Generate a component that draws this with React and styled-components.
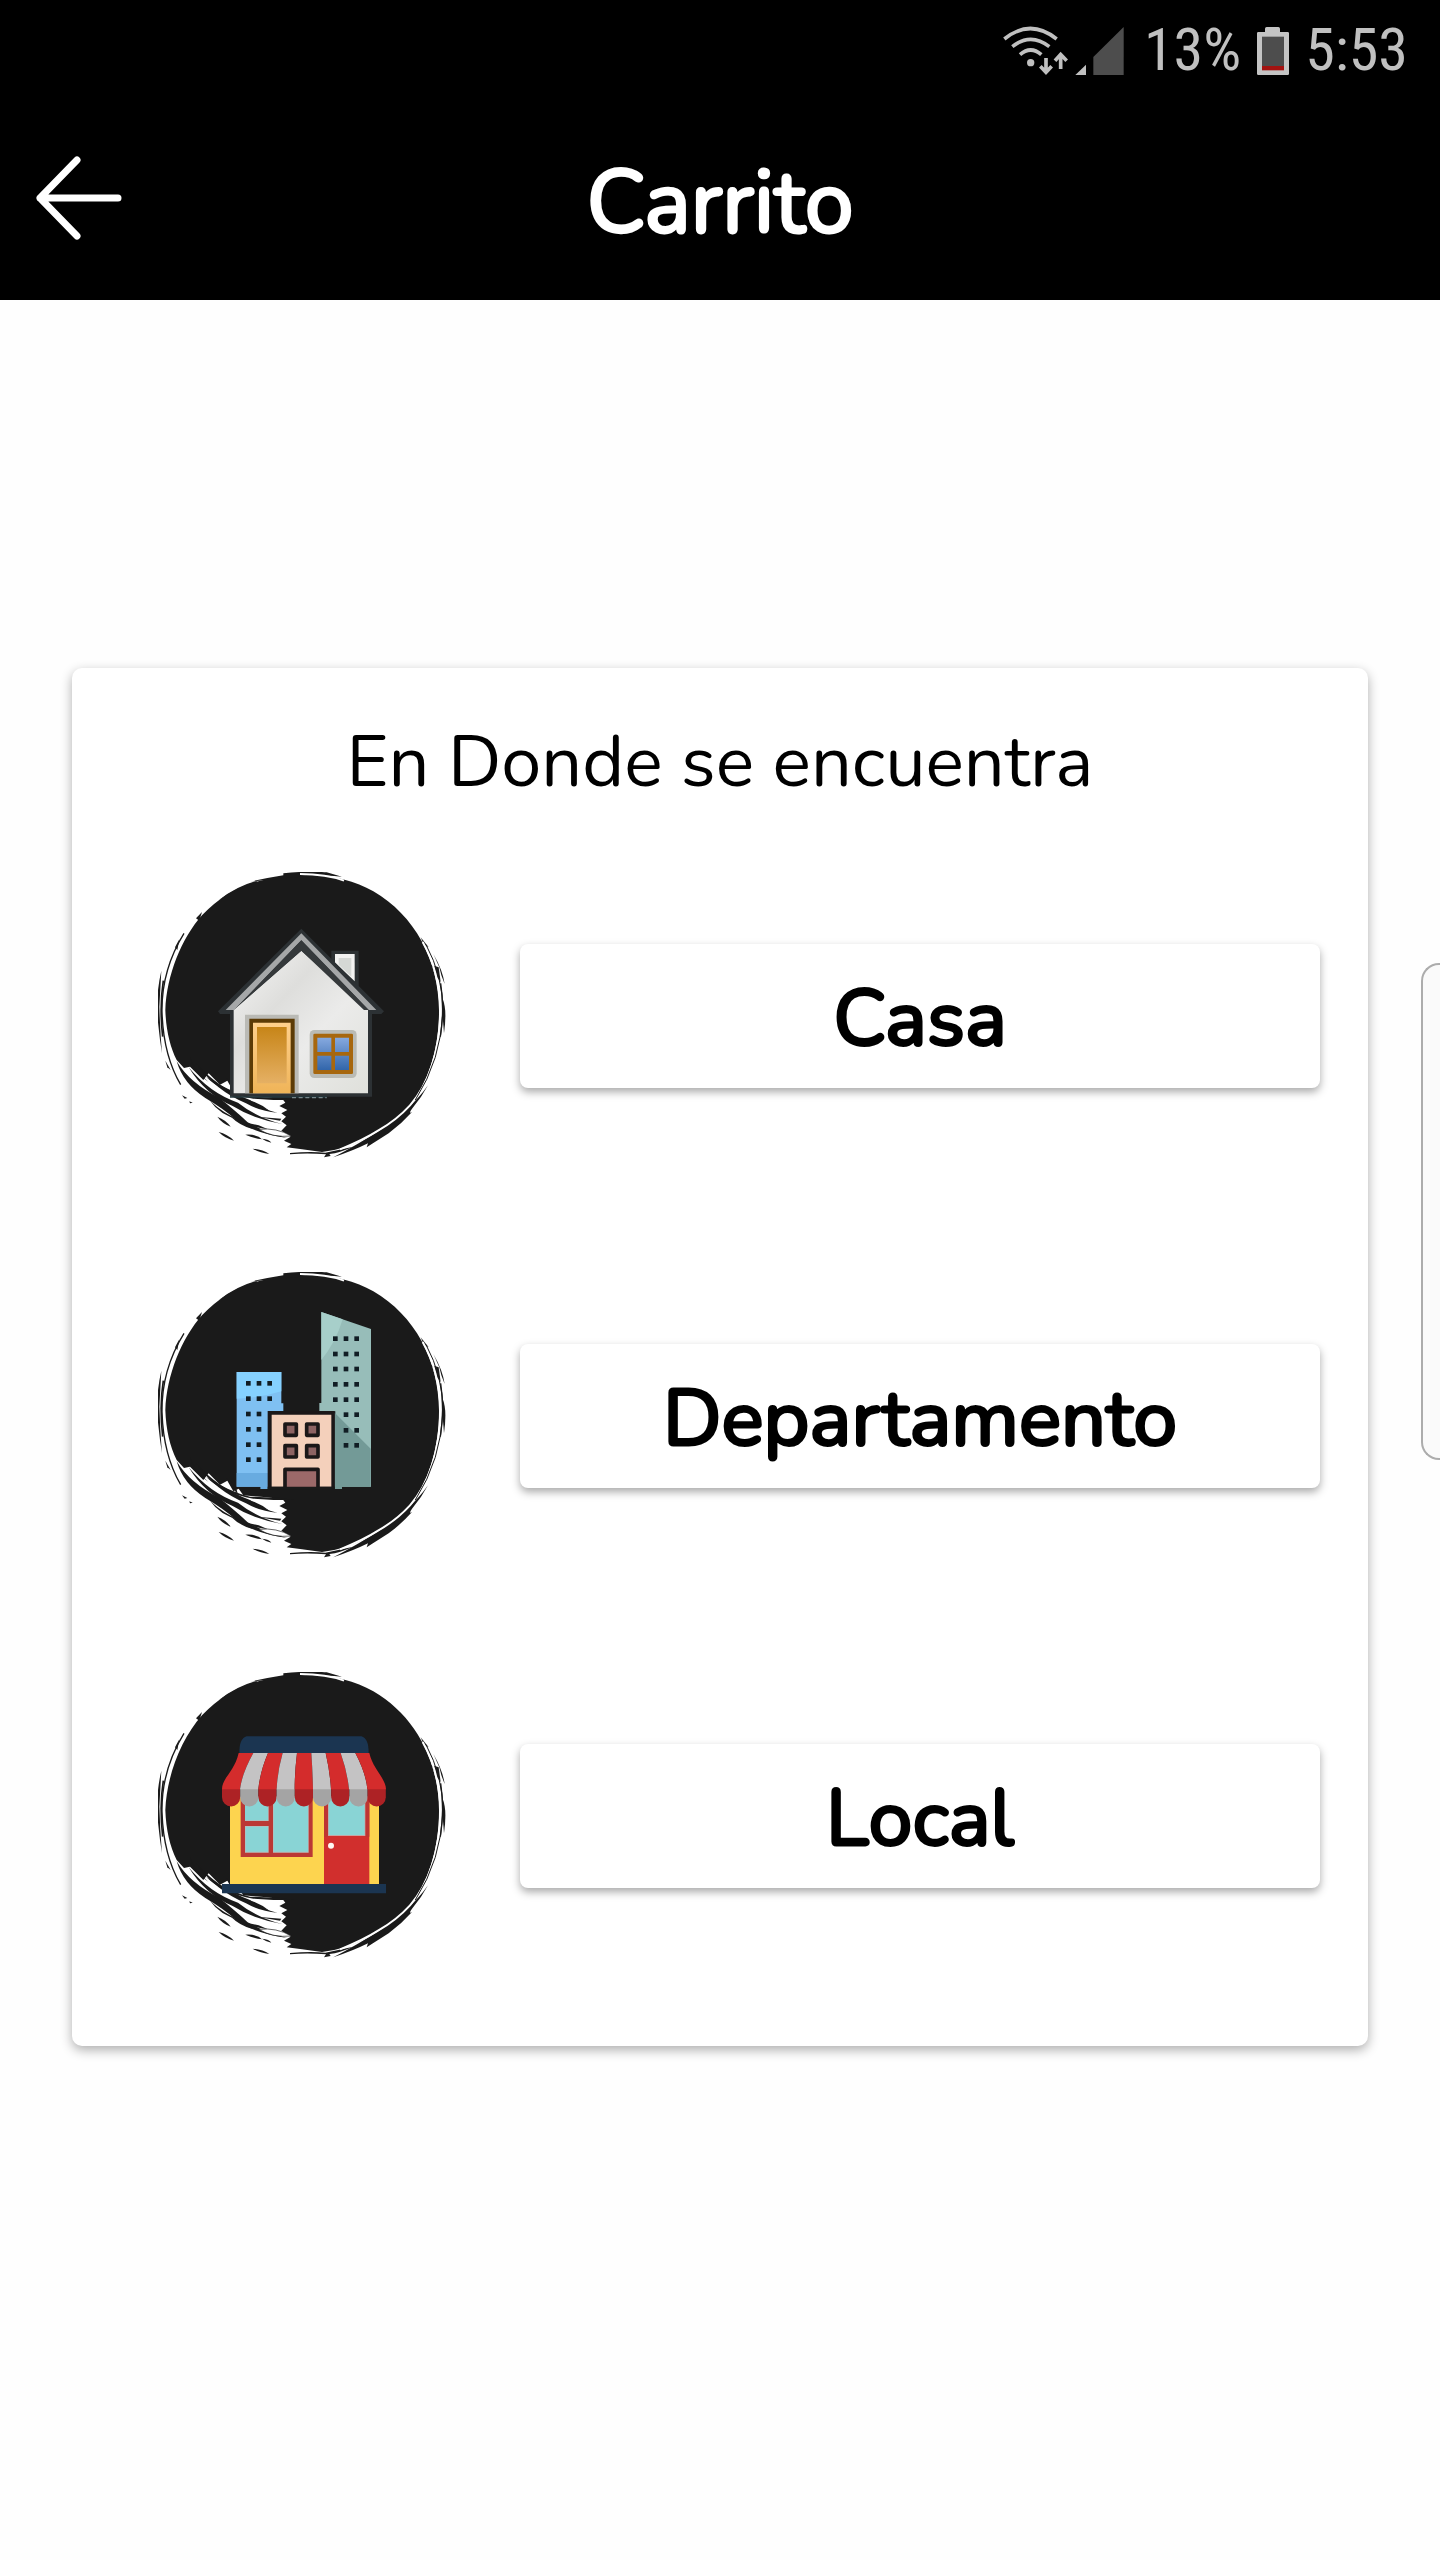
import { useState } from "react";
import styled, { createGlobalStyle } from "styled-components";

const GlobalStyle = createGlobalStyle`
  * {
    box-sizing: border-box;
  }
  body {
    margin: 0;
    background-color: #fefefe;
    color: black;
    font-family: Nunito, Lato, sans-serif;
  }
`;

const Container = styled.div`
  display: flex;
  flex-direction: column;
  min-height: 100vh;
`;

const StatusBar = styled.div`
  display: flex;
  flex-direction: row;
  justify-content: flex-end;
  align-items: center;
  height: 100px;
  padding-right: 32px;
  background-color: black;
  color: #c0c0c0;
  font-family: "Roboto Condensed", "Liberation Sans Narrow", Roboto, sans-serif;
  font-size: 60px;
  line-height: 64px;
`;

const StatusIcon = styled.svg`
  width: ${(props) => props.$width}px;
  height: 49px;
  margin-right: ${(props) => props.$gap}px;
`;

const BatteryLevel = styled.span`
  margin-right: 16px;
`;

const Header = styled.header`
  display: grid;
  grid-template-columns: 1fr auto 1fr;
  align-items: center;
  height: 200px;
  padding: 0 36px;
  background-color: black;
  color: white;
`;

const BackButton = styled.button`
  justify-self: start;
  display: flex;
  padding: 0 0 4px;
  border: none;
  background: none;
`;

const Title = styled.h1`
  margin: 0;
  padding-top: 6px;
  font-size: 88px;
  line-height: 108px;
  font-weight: normal;
  -webkit-text-stroke: 3px white;
`;

const Main = styled.main`
  padding: 368px 5% 0;
`;

const Card = styled.section`
  padding: 46px 48px 86px 86px;
  border-radius: 10px;
  background-color: white;
  box-shadow: 0 4px 12px 0 rgba(0, 0, 0, 0.32);
`;

const Question = styled.h2`
  margin: 0 0 62px;
  padding-right: 38px;
  font-size: 72px;
  line-height: 96px;
  font-weight: normal;
  text-align: center;
`;

const OptionList = styled.div`
  display: flex;
  flex-direction: column;
  gap: 112px;
`;

const OptionRow = styled.div`
  display: flex;
  flex-direction: row;
  align-items: center;
  gap: 74px;
`;

const OptionIcon = styled.svg`
  flex: none;
  width: 288px;
  height: 288px;
`;

const OptionButton = styled.button`
  flex: 1;
  height: 144px;
  padding: 6px 0 0;
  border: none;
  border-radius: 8px;
  background-color: white;
  box-shadow: 0 4px 8px 0 rgba(0, 0, 0, 0.34);
  color: black;
  font-family: inherit;
  font-size: 79px;
  line-height: 100px;
  font-weight: normal;
  -webkit-text-stroke: 3px black;
`;

const EdgeHandle = styled.div`
  position: fixed;
  top: 963px;
  right: 0;
  width: 19px;
  height: 497px;
  border: 2px solid #acacac;
  border-right: none;
  border-radius: 18px 0 0 18px;
  background-color: #fafafa;
`;

// thin tapered strokes left by the bristles
const BRISTLES = [
  "M330 95Q380 84 430 76L430 70Q500 62 560 67L606 80Q560 76 500 75L480 80Z",
  "M237 150Q290 108 352 92L346 100Q290 122 237 150Z",
  "M168 205L186 186L178 212Z",
  "M105 292L118 268L112 300Z",
  "M64 362Q48 430 52 500L60 570L66 610Q60 540 58 470Z",
  "M76 632L92 660L82 652Z",
  "M842 262L866 292L852 284Z",
  "M880 312Q908 360 914 402L904 376L898 352Z",
  "M908 446Q922 480 912 550L908 500Z",
  "M874 344L896 352L902 396L888 378Z",
  "M864 706Q838 744 796 780Q762 812 724 838Q650 886 580 922Q640 902 684 880L680 892L746 850Q784 822 816 786Q804 794 816 776Q844 744 864 706Z",
  "M450 909Q510 904 556 908L640 890Q600 908 568 912L572 918L552 922L558 913Q500 908 450 913Z",
  "M150 622Q164 664 206 696Q160 668 150 622Z",
  "M110 634Q150 700 236 742Q290 786 322 816Q366 844 442 864Q340 850 286 808Q256 780 196 744Q130 702 110 634Z",
  "M146 652Q210 730 294 758Q352 804 426 822Q338 806 278 768Q196 734 146 652Z",
  "M168 640Q236 716 330 750Q372 780 412 788Q360 784 318 760Q226 722 168 640Z",
  "M198 680Q266 724 330 740L420 744L462 750L400 750L340 746Q248 730 198 680Z",
  "M260 684Q290 706 294 734L276 712Z",
  "M290 742Q350 750 388 782Q340 768 290 742Z",
  "M210 736Q246 752 258 776L300 796L262 786Z",
  "M210 752Q250 790 300 810Q240 796 210 752Z",
  "M270 798Q318 820 340 838Q300 828 270 798Z",
  "M350 800L424 806L420 812Z",
  "M320 818L356 826L384 838L348 832Z",
  "M232 800Q258 810 272 830Q246 820 232 800Z",
  "M236 846Q262 852 282 872Q256 866 236 846Z",
  "M316 854Q352 852 366 868Q340 864 316 854Z",
  "M366 866Q388 868 394 878Q380 876 366 866Z",
  "M338 896Q368 898 388 912Q358 908 338 896Z",
  "M126 736L142 744L134 746Z",
  "M148 754L158 758L150 760Z",
];

// paint lines that run along the rim of the disc
const RIMS = [
  { d: "M132 250Q64 360 66 486Q70 616 122 704", width: 4 },
  { d: "M70 392Q58 470 68 560", width: 5 },
  { d: "M858 284Q908 376 909 482Q904 628 826 750", width: 3 },
  { d: "M902 400Q914 480 901 560", width: 4 },
];

const BrushCircle = () => (
  <g fill="#1a1a1a">
    <path d="M486 76C560 70 640 90 700 124C824 196 896 330 897 480C898 600 862 704 808 768Q770 808 714 842Q670 872 620 890Q580 902 546 906L486 898L440 892L454 882L432 872L452 860L424 842L440 826L424 814L438 800L424 790L442 780L418 768L436 758L428 748L380 742L310 736L296 716L280 724L262 692L240 704L206 670L190 690L150 650L132 654L110 630C90 590 78 540 76 480C80 376 124 266 186 196Q256 122 346 96Q410 78 486 76Z" />
    {BRISTLES.map((d) => (
      <path key={d} d={d} />
    ))}
    <path
      d="M848 276C884 340 900 410 901 480C900 600 866 704 810 766Q770 810 714 842Q670 870 600 898M480 72Q560 72 612 92"
      fill="none"
      stroke="white"
      strokeWidth="6"
    />
    {RIMS.map(({ d, width }) => (
      <path key={d} d={d} fill="none" stroke="#1a1a1a" strokeWidth={width} />
    ))}
    <path
      d="M356 838Q410 832 454 858Q400 864 356 838Z"
      fill="white"
      stroke="#1a1a1a"
      strokeWidth="2"
    />
  </g>
);

const House = () => (
  <g>
    <defs>
      <linearGradient id="wall" x1="0" y1="0" x2="1" y2="1">
        <stop offset="0" stopColor="#f6f6f5" />
        <stop offset="0.35" stopColor="#dededc" />
        <stop offset="0.6" stopColor="#ebebea" />
        <stop offset="1" stopColor="#dfe0db" />
      </linearGradient>
      <linearGradient id="door" x1="0" y1="0" x2="0" y2="1">
        <stop offset="0" stopColor="#c78518" />
        <stop offset="1" stopColor="#e5b064" />
      </linearGradient>
      <linearGradient id="doorEdge" x1="0" y1="0" x2="0" y2="1">
        <stop offset="0" stopColor="#ffd08c" />
        <stop offset="1" stopColor="#efb458" />
      </linearGradient>
      <linearGradient id="glass" x1="0" y1="0" x2="0" y2="1">
        <stop offset="0" stopColor="#86a9df" />
        <stop offset="1" stopColor="#3266ab" />
      </linearGradient>
    </defs>
    <path d="M574 302H656V416L574 340Z" fill="#2c3133" />
    <path d="M585 312H644V394L585 338Z" fill="#f2f2f1" />
    <path d="M596 324H634V380L596 344Z" fill="#d5d8d5" />
    <path
      d="M484 236L732 484L724 492H696V740H270V492H240L234 484Z"
      fill="#2c3134"
    />
    <path d="M484 302L684 480V730H281V480Z" fill="url(#wall)" />
    <path
      d="M484 250L709 480H686L484 271L282 480H257Z"
      fill="#a5a7a8"
    />
    <path d="M484 271L686 480H672L484 302L292 470L282 480Z" fill="#35393b" />
    <path d="M315 494H476V730H315Z" fill="#babab5" />
    <path d="M328 506H464V730H328Z" fill="#5c3b06" />
    <path d="M339 518H452V730H339Z" fill="url(#doorEdge)" />
    <path d="M351 531H440V700H351Z" fill="url(#door)" />
    <rect x="509" y="540" width="141" height="144" rx="14" fill="#babbb5" />
    <rect x="520" y="551" width="119" height="121" rx="4" fill="#a7670e" />
    <path
      d="M532 563H574V606H532ZM585 563H627V606H585ZM532 617H574V660H532ZM585 617H627V660H585Z"
      fill="url(#glass)"
    />
    <path d="M270 741H560" stroke="#24383e" strokeWidth="5" />
    <path
      d="M456 743H560"
      stroke="#76868a"
      strokeWidth="4"
      strokeDasharray="12 8"
    />
  </g>
);

const windowDots = (columns, rows) =>
  rows.flatMap((y) =>
    columns.map((x) => (
      <rect key={`${x}-${y}`} x={x} y={y} width="14" height="14" />
    ))
  );

const Buildings = () => (
  <g>
    <path d="M290 366H424V460H430V484H386V710H380V717H362V710H290Z" fill="#7fc0f2" />
    <path d="M290 366H424V424Q360 444 290 446Z" fill="#85d1ff" />
    <path d="M290 669H384V717H362V710H290Z" fill="#68abe0" />
    <path d="M544 186L693 237V710H606V717H586V484H538V459H544Z" fill="#97bdb9" />
    <path d="M544 186L608 208Q588 276 544 330Z" fill="#a7cfca" />
    <path d="M584 488L692 596V710H606V717H584Z" fill="#739a97" />
    <g fill="#111d24">
      {windowDots([318, 350, 382], [393, 439])}
      {windowDots([318, 350], [485, 531, 577, 622])}
      {windowDots([579, 611, 643], [259, 305, 350, 396, 442])}
      {windowDots([611, 643], [487, 534, 579])}
    </g>
    <path d="M383 483H584V717H383Z" fill="#1b1718" />
    <path d="M395 494H574V710H395Z" fill="#f4d0bb" />
    <g fill="#8d6363" stroke="#1b1718" strokeWidth="11" strokeLinejoin="round">
      <rect x="435" y="522" width="34" height="34" />
      <rect x="500" y="522" width="34" height="34" />
      <rect x="435" y="587" width="34" height="34" />
      <rect x="500" y="587" width="34" height="34" />
      <path d="M435 714V658H534V714" fill="#9c6969" />
    </g>
    <path d="M383 710H584V718H383Z" fill="#1a1a1a" />
  </g>
);

const STRIPES = [
  "M296 309H340Q306 370 300 418H246C246 384 284 364 296 309Z",
  "M340 309H384Q360 366 355 418H300Q306 370 340 309Z",
  "M384 309H428Q412 366 410 418H355Q360 366 384 309Z",
  "M428 309H471Q464 366 464 418H410Q412 366 428 309Z",
  "M471 309H514Q518 366 519 418H464Q464 366 471 309Z",
  "M514 309H557Q570 366 573 418H519Q518 366 514 309Z",
  "M557 309H602Q622 366 627 418H573Q570 366 557 309Z",
  "M602 309H646Q678 370 682 418H627Q622 366 602 309Z",
  "M646 309H688C698 356 738 386 738 418H682Q678 370 646 309Z",
];

const Store = () => (
  <g>
    <path d="M270 440H717V704H270Z" fill="#fdd44f" />
    <path d="M302 440H518V621H302Z" fill="#bb3835" />
    <path
      d="M315 440H386V513H315ZM315 528H386V608H315ZM399 440H506V608H399Z"
      fill="#b9bdbd"
    />
    <path
      d="M315 440H384V511H315ZM317 530H384V605H317ZM401 440H504V605H401Z"
      fill="#89d4d5"
    />
    <path d="M552 440H688V704H552Z" fill="#d12f2d" />
    <path d="M552 440H564V560H552ZM676 440H688V560H676Z" fill="#bd3533" />
    <path d="M564 440H676V558H564Z" fill="#c6a5a4" />
    <path d="M566 440H674V555H566Z" fill="#89d4d5" />
    <circle cx="573" cy="587" r="9" fill="#fff8f2" />
    {STRIPES.map((d, index) => (
      <g key={d}>
        <path
          d={`M${246 + index * 54.6} 416h54.6v26a27.3 27.3 0 0 1 -54.6 0Z`}
          fill={index % 2 ? "#a4a4a4" : "#ad2225"}
        />
        <path d={d} fill={index % 2 ? "#c4c3c4" : "#d42c2c"} />
      </g>
    ))}
    <path
      d="M320 259H664Q686 264 686 309H298Q298 264 320 259Z"
      fill="#1b3551"
    />
    <path d="M246 702H738V730H246Z" fill="#1b3551" />
  </g>
);

const OPTIONS = [
  { name: "Casa", Picture: House },
  { name: "Departamento", Picture: Buildings },
  { name: "Local", Picture: Store },
];

function App() {
  const [, setSelectedPlace] = useState();

  return (
    <Container>
      <GlobalStyle />
      <StatusBar>
        <StatusIcon $width={65} $gap={7} viewBox="69 72 195 147">
          <g fill="none" stroke="#c0c0c0" strokeWidth="11">
            <path d="M73 111Q151 48 230 111" />
            <path d="M97 134Q152 90 208 134" />
            <path d="M120 158Q152 130 184 158" />
            <path d="M198 168V208M181 193L198 211L215 193M242 201V160M225 176L242 157L260 176" />
          </g>
          <circle cx="152" cy="182" r="11" fill="#c0c0c0" />
        </StatusIcon>
        <StatusIcon $width={49} $gap={20} viewBox="285 72 147 147">
          <path d="M286 219L318 188V219Z" fill="#c0c0c0" />
          <path d="M340 219V165L431 75V219Z" fill="#4d4d4d" />
        </StatusIcon>
        <BatteryLevel>13%</BatteryLevel>
        <StatusIcon $width={32} $gap={16} viewBox="828 72 96 147">
          <path
            d="M832 90H852V80Q852 75 857 75H892Q897 75 897 80V90H920Q924 90 924 94V215Q924 219 920 219H832Q828 219 828 215V94Q828 90 832 90Z"
            fill="#c4c4c4"
          />
          <path d="M843 104H909V192H843Z" fill="#4d4d4d" />
          <path d="M843 192H909V205H843Z" fill="#a31210" />
        </StatusIcon>
        <span>5:53</span>
      </StatusBar>
      <Header>
        <BackButton aria-label="Volver">
          <svg width="86" height="84" viewBox="0 0 86 84">
            <path
              d="M41 4L4 42L41 80M4 42H82"
              fill="none"
              stroke="white"
              strokeWidth="7"
              strokeLinecap="round"
              strokeLinejoin="round"
            />
          </svg>
        </BackButton>
        <Title>Carrito</Title>
      </Header>
      <Main>
        <Card>
          <Question>En Donde se encuentra</Question>
          <OptionList>
            {OPTIONS.map(({ name, Picture }) => (
              <OptionRow key={name}>
                <OptionIcon viewBox="54 66 864 864">
                  <BrushCircle />
                  <Picture />
                </OptionIcon>
                <OptionButton onClick={() => setSelectedPlace(name)}>
                  {name}
                </OptionButton>
              </OptionRow>
            ))}
          </OptionList>
        </Card>
      </Main>
      <EdgeHandle />
    </Container>
  );
}

export default App;
